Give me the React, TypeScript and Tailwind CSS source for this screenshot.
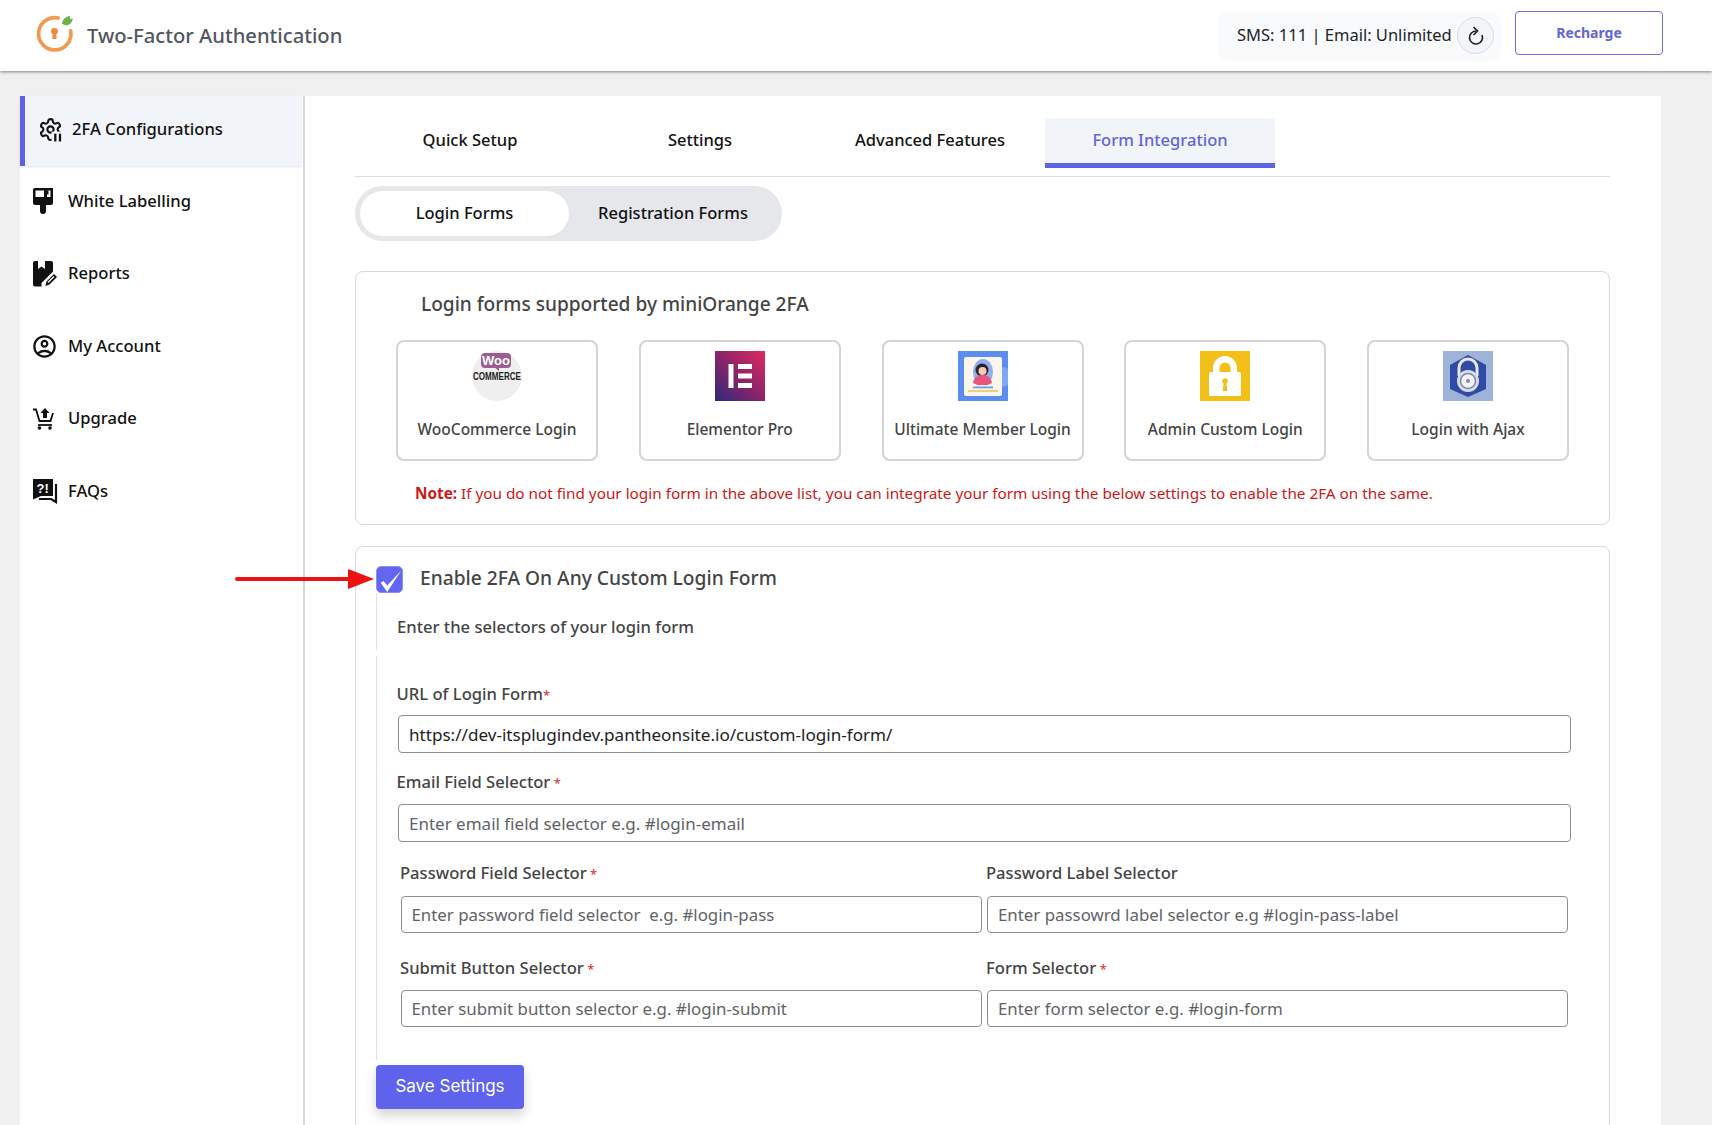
import { MdOutlineAccountCircle } from "react-icons/md";

function Logo() {
  return (
    <svg width="41" height="41" viewBox="0 0 38 38" fill="none" className="mb-[5px]">
      <path d="M22.500 4.600A15 15 0 1 0 34 16.500" stroke="#f0994f" strokeWidth="3.400" strokeLinecap="round" />
      <path d="M26 10c.3-4 3-6.400 7-7.500l.5 3 2.500-.5c-.5 3.500-3 6.200-6.500 6.500z" fill="#6fb04a" />
      <circle cx="19" cy="17" r="3.200" fill="#ef8a3c" />
      <path d="M17.600 18h2.800l.6 6h-4z" fill="#ef8a3c" />
    </svg>
  );
}

function RefreshIcon() {
  return (
    <svg width="18" height="20" viewBox="0 0 18 20" fill="none" stroke="#222" strokeWidth="1.700">
      <path d="M9 5A6.500 6.500 0 1 0 15 9" />
      <path d="M6.500 1l4 4-4 4" />
    </svg>
  );
}

function GearIcon() {
  return (
    <svg width="25" height="25" viewBox="0 0 24 24" fill="none" stroke="#111" strokeWidth="2">
      <path d="M12.220 2h-.44a2 2 0 0 0-2 2v.18a2 2 0 0 1-1 1.730l-.43.25a2 2 0 0 1-2 0l-.15-.08a2 2 0 0 0-2.730.73l-.22.38a2 2 0 0 0 .73 2.730l.15.1a2 2 0 0 1 1 1.720v.51a2 2 0 0 1-1 1.740l-.15.09a2 2 0 0 0-.73 2.730l.22.38a2 2 0 0 0 2.730.73l.15-.08a2 2 0 0 1 2 0l.43.25a2 2 0 0 1 1 1.730V20a2 2 0 0 0 2 2h.44a2 2 0 0 0 2-2v-.18a2 2 0 0 1 1-1.730l.43-.25a2 2 0 0 1 2 0l.15.08a2 2 0 0 0 2.730-.73l.22-.39a2 2 0 0 0-.73-2.730l-.15-.08a2 2 0 0 1-1-1.740v-.5a2 2 0 0 1 1-1.740l.15-.09a2 2 0 0 0 .73-2.730l-.22-.38a2 2 0 0 0-2.730-.73l-.15.08a2 2 0 0 1-2 0l-.43-.25a2 2 0 0 1-1-1.730V4a2 2 0 0 0-2-2z" />
      <circle cx="12" cy="12" r="3" />
      <rect x="13" y="14" width="11" height="10" fill="#f1f5f9" stroke="none" />
      <rect x="15.500" y="16" width="2.200" height="7.500" fill="#111" stroke="none" />
      <rect x="20" y="16" width="2.200" height="7.500" fill="#111" stroke="none" />
    </svg>
  );
}

function BrushIcon() {
  return (
    <svg width="20" height="26" viewBox="0 0 20 26">
      <path d="M2 0h18v15a2 2 0 0 1-2 2h-5v6a3 3 0 0 1-6 0v-6H2a2 2 0 0 1-2-2V2a2 2 0 0 1 2-2z" fill="#111" />
      <path d="M2.500 2.500h8.500v6.500h-8.500zM14 2.500h3.500v6.500h-3.500z" fill="#fff" />
      <rect x="14" y="2.500" width="1.500" height="4" fill="#111" />
    </svg>
  );
}

function ReportIcon() {
  return (
    <svg width="24" height="26" viewBox="0 0 24 26">
      <path d="M2 0h3v8l3.500-2.500L12 8V0h6a2 2 0 0 1 2 2v8.500L8.500 22v3.500H2a2 2 0 0 1-2-2V2a2 2 0 0 1 2-2z" fill="#111" />
      <path d="M12.500 25l1-4.500L21 13l3 3-7.500 7.500z" fill="#111" />
      <path d="M15 21.500l6-6" stroke="#fff" strokeWidth="1.200" />
    </svg>
  );
}

function CartIcon() {
  return (
    <svg width="21" height="22" viewBox="0 0 21 22" fill="none" stroke="#111" strokeWidth="1.800">
      <path d="M0 1.500h3l3.500 11.500h11l2.500-8" />
      <path d="M5 17h14" />
      <circle cx="6.500" cy="20" r="1.800" fill="#111" stroke="none" />
      <circle cx="17" cy="20" r="1.800" fill="#111" stroke="none" />
      <path d="M12 0l4.500 5H14v5h-4V5H7.500z" fill="#111" stroke="none" />
    </svg>
  );
}

function FaqIcon() {
  return (
    <svg width="25" height="25" viewBox="0 0 25 25">
      <path d="M0 0h20v17H8l-8 3.500z" fill="#111" />
      <text x="3.500" y="14" fontSize="13" fontWeight="700" fill="#fff" fontFamily="'Liberation Sans', sans-serif">
        ?!
      </text>
      <path d="M23 5v18l-5-3H6" fill="none" stroke="#111" strokeWidth="2.200" />
    </svg>
  );
}

function WooLogo() {
  return (
    <svg width="50" height="50" viewBox="0 0 50 50">
      <circle cx="25" cy="25" r="25" fill="#efefef" />
      <rect x="9" y="2" width="30" height="15" rx="4" fill="#9b5c8f" />
      <path d="M22 16l5 4v-4z" fill="#9b5c8f" />
      <text x="24" y="14" textAnchor="middle" fontSize="13" fontWeight="700" fill="#fff" fontFamily="'Liberation Sans', sans-serif">
        Woo
      </text>
      <text x="1" y="28.500" textLength="48" lengthAdjust="spacingAndGlyphs" fontSize="10" fontWeight="700" fill="#222" fontFamily="'Liberation Sans', sans-serif">
        COMMERCE
      </text>
    </svg>
  );
}

function ElementorLogo() {
  return (
    <svg width="50" height="50" viewBox="0 0 50 50">
      <defs>
        <linearGradient id="el" x1="0" y1="1" x2="1" y2="0">
          <stop offset="0" stopColor="#2f2a7c" />
          <stop offset="0.5" stopColor="#8a2468" />
          <stop offset="1" stopColor="#e22a5f" />
        </linearGradient>
      </defs>
      <rect width="50" height="50" fill="url(#el)" />
      <path d="M13.500 13h5v24h-5zM23 13h14v5H23zM23 22.500h14v5H23zM23 32h14v5H23z" fill="#fff" />
    </svg>
  );
}

function MemberLogo() {
  return (
    <svg width="50" height="50" viewBox="0 0 50 50">
      <rect width="50" height="50" fill="#5a8df0" />
      <circle cx="44" cy="26" r="10" fill="#7fa8f4" />
      <rect x="6" y="6" width="38" height="39" rx="2" fill="#faf5ee" />
      <ellipse cx="25" cy="21" rx="10" ry="13" fill="#8fb0ec" />
      <circle cx="24" cy="19" r="6.500" fill="#2b2230" />
      <circle cx="24.500" cy="20" r="4" fill="#f4c9b8" />
      <path d="M15 32c1-6 5-8 9.500-8s8.500 2 9.500 8l-4.500 2h-10z" fill="#e8557c" />
      <rect x="15" y="35.500" width="20" height="1.800" fill="#6f9be8" />
      <rect x="10" y="39" width="30" height="2" fill="#f1cf74" />
    </svg>
  );
}

function AdminLogo() {
  return (
    <svg width="50" height="50" viewBox="0 0 50 50">
      <rect width="50" height="50" fill="#f2c018" />
      <path d="M13 22v-5a12 12 0 0 1 24 0v5h-6.500v-5a5.500 5.500 0 0 0-11 0v5z" fill="#fff" />
      <rect x="9" y="21" width="32" height="24" rx="1.500" fill="#fff" />
      <circle cx="25" cy="30" r="2.800" fill="#f2c018" />
      <path d="M23.700 31h2.600l1 9h-4.600z" fill="#f2c018" />
    </svg>
  );
}

function AjaxLogo() {
  return (
    <svg width="50" height="50" viewBox="0 0 50 50">
      <rect width="50" height="50" fill="#9fb2d8" />
      <path d="M25 4l18 10v24L25 46 7 38V14z" fill="#2f4ba5" />
      <path d="M16 25v-8a9 9 0 0 1 18 0v8" fill="none" stroke="#e6e8ef" strokeWidth="3" />
      <circle cx="25" cy="30" r="11" fill="#d8dbe6" />
      <circle cx="25" cy="30" r="7.500" fill="#f2f3f7" stroke="#7d88a8" strokeWidth="1.500" />
      <circle cx="25" cy="30" r="2" fill="#7d88a8" />
    </svg>
  );
}

const sideItems = [
  { label: "White Labelling", icon: <BrushIcon /> },
  { label: "Reports", icon: <ReportIcon /> },
  { label: "My Account", icon: <MdOutlineAccountCircle size={27} color="#111" className="-ml-[2px]" /> },
  { label: "Upgrade", icon: <CartIcon /> },
  { label: "FAQs", icon: <FaqIcon /> },
];

const forms = [
  { label: "WooCommerce Login", logo: <WooLogo /> },
  { label: "Elementor Pro", logo: <ElementorLogo /> },
  { label: "Ultimate Member Login", logo: <MemberLogo /> },
  { label: "Admin Custom Login", logo: <AdminLogo /> },
  { label: "Login with Ajax", logo: <AjaxLogo /> },
];

const tabs = ["Quick Setup", "Settings", "Advanced Features", "Form Integration"];

function Req() {
  return <span className="text-[#d9383f] text-[13px]"> *</span>;
}

function Field({ placeholder }: { placeholder: string }) {
  return (
    <input
      readOnly
      placeholder={placeholder}
      className="w-full h-[37px] px-[10px] border border-[#8c8f94] rounded-[4px] bg-white text-[16.850px] text-[#333] placeholder:text-[#5f6368] outline-none"
    />
  );
}

export default function App() {
  return (
    <div className="w-[1712px] h-[1125px] overflow-hidden bg-[#f0f0f1] font-['Noto_Sans',sans-serif]">
      <header className="h-[71px] bg-white flex items-center justify-between pl-[34px] pr-[49px] shadow-[0_1px_3px_rgba(0,0,0,0.45)] relative">
        <div className="flex items-center gap-[12px]">
          <Logo />
          <h1 className="text-[20.200px] text-[#50575e] font-medium">Two-Factor Authentication</h1>
        </div>
        <div className="flex items-center gap-[15px]">
          <div className="w-[281px] h-[47px] bg-[#f8fafc] rounded-[10px] flex items-center justify-between pl-[18px] pr-[6px] shadow-[0_1px_4px_rgba(0,0,0,0.04)]">
            <span className="whitespace-nowrap text-[16.500px] text-[#1d2327]">SMS: 111 | Email: Unlimited</span>
            <span className="w-[37px] h-[37px] shrink-0 rounded-full border border-[#d8dce2] bg-[#f3f5f8] flex items-center justify-center">
              <RefreshIcon />
            </span>
          </div>
          <button className="w-[148px] h-[44px] mb-[6px] border-[1.500px] border-[#6c6fd8] rounded-[4px] text-[14px] font-bold text-[#6366d6] bg-white">
            Recharge
          </button>
        </div>
      </header>

      <div className="flex pt-[25px] pl-[20px] pr-[51px]">
        <aside className="w-[283px] h-[1029px] bg-white shrink-0">
          <div className="h-[70px] flex items-center gap-[9px] pl-[13px] pb-[3px] border-l-[5px] border-[#5e62e6] bg-[#f1f5f9] shadow-[0_1px_2px_rgba(0,0,0,0.12)] mr-[2px]">
            <GearIcon />
            <span className="text-[16.600px] font-medium text-[#111]">2FA Configurations</span>
          </div>
          {sideItems.map((item) => (
            <div key={item.label} className="h-[72.500px] flex items-center pl-[13px] pb-[2px]">
              <span className="w-[35px] flex items-center">{item.icon}</span>
              <span className="text-[16.600px] font-medium text-[#111]">{item.label}</span>
            </div>
          ))}
        </aside>

        <main className="flex-1 h-[1029px] bg-white border-l-2 border-[#d6d6d6] pl-[50px] pr-[51px] pt-[22px]">
          <div className="flex h-[59px] border-b border-[#dcdcdc]">
            {tabs.map((tab, i) =>
              i === 3 ? (
                <div key={tab} className="w-[230px] h-[50px] bg-[#f1f5f9] border-b-[5px] border-[#5e62e6] flex items-center justify-center text-[16.500px] font-medium text-[#6366d6]">
                  {tab}
                </div>
              ) : (
                <div key={tab} className="w-[230px] h-[50px] pb-[5px] flex items-center justify-center text-[16.500px] font-medium text-[#111]">
                  {tab}
                </div>
              )
            )}
          </div>

          <div className="mt-[9px] w-[427px] h-[55px] bg-[#e5e7eb] rounded-full flex items-center pl-[5px] text-[16.500px] font-medium text-[#111]">
            <div className="w-[209px] h-[45px] bg-white rounded-full flex items-center justify-center">Login Forms</div>
            <div className="flex-1 flex items-center justify-center pr-[5px]">Registration Forms</div>
          </div>

          <section className="mt-[30px] h-[254px] border border-[#d9d9d9] rounded-[8px] relative">
            <h2 className="ml-[65px] mt-[18px] leading-[28px] text-[19.100px] font-medium text-[#444]">
              Login forms supported by miniOrange 2FA
            </h2>
            <div className="mt-[22px] mx-[40px] flex justify-between">
              {forms.map((form) => (
                <div key={form.label} className="w-[202px] h-[121px] border-2 border-[#d4d4d4] rounded-[8px] flex flex-col items-center pt-[9px]">
                  {form.logo}
                  <span className="mt-[17px] text-[15.500px] font-medium text-[#444]">{form.label}</span>
                </div>
              ))}
            </div>
            <p className="ml-[59px] mt-[21px] text-[15.300px] text-[#cc1818]">
              <b className="font-bold">Note:</b> If you do not find your login form in the above list, you can integrate your form using the below settings to enable the 2FA on the same.
            </p>
          </section>

          <section className="mt-[21px] h-[600px] border border-[#d9d9d9] rounded-[8px] relative">
            <svg className="absolute left-[-121px] top-[21px]" width="140" height="22" viewBox="0 0 140 22">
              <rect x="0" y="9" width="115" height="4" rx="2" fill="#ee1111" />
              <path d="M113 1l26 10-26 10z" fill="#ee1111" />
            </svg>
            <div className="flex items-center h-[27px] mt-[19px] pl-[20px]">
              <span className="w-[27px] h-[27px] rounded-[5px] bg-[#6366f1] border border-[#8f90e0] flex items-center justify-center">
                <svg width="25" height="25" viewBox="0 0 27 27">
                  <path d="M4 17l3-2 4 5L26 4 11 27z" fill="#fff" />
                </svg>
              </span>
              <span className="ml-[17px] pb-[3px] text-[19.200px] font-medium text-[#444]">Enable 2FA On Any Custom Login Form</span>
            </div>
            <div className="ml-[20px] h-[57px] border-l border-[#e0e0e0] pl-[20px] pt-[22px] text-[16.600px] font-medium text-[#444] leading-[24px]">
              Enter the selectors of your login form
            </div>
            <div className="ml-[20px] mt-[6px] h-[404px] border-l border-[#e0e0e0] pl-[19.500px] pt-[26px] text-[16.600px] font-medium text-[#444]">
              <div className="leading-[24px]">URL of Login Form<span className="text-[#d9383f] text-[13px]">*</span></div>
              <input
                readOnly
                value="https://dev-itsplugindev.pantheonsite.io/custom-login-form/"
                className="mt-[8px] ml-[1.500px] w-[1173px] h-[38px] px-[10px] border border-[#8c8f94] rounded-[4px] bg-white text-[17.100px] font-normal text-[#222] outline-none"
              />
              <div className="mt-[17px] leading-[24px]">Email Field Selector<Req /></div>
              <input
                readOnly
                placeholder="Enter email field selector e.g. #login-email"
                className="mt-[9px] ml-[1.500px] w-[1173px] h-[38px] px-[10px] border border-[#8c8f94] rounded-[4px] bg-white text-[17px] font-normal text-[#333] placeholder:text-[#5f6368] outline-none"
              />
              <div className="mt-[19px] ml-[3.500px] grid grid-cols-[586px_581px] leading-[24px]">
                <div>Password Field Selector<Req /></div>
                <div>Password Label Selector</div>
              </div>
              <div className="mt-[10px] ml-[4px] grid grid-cols-[581px_581px] gap-x-[5.500px] font-normal">
                <Field placeholder="Enter password field selector  e.g. #login-pass" />
                <Field placeholder="Enter passowrd label selector e.g #login-pass-label" />
              </div>
              <div className="mt-[23px] ml-[3.500px] grid grid-cols-[586px_581px] leading-[24px]">
                <div>Submit Button Selector<Req /></div>
                <div>Form Selector<Req /></div>
              </div>
              <div className="mt-[9px] ml-[4px] grid grid-cols-[581px_581px] gap-x-[5.500px] font-normal">
                <Field placeholder="Enter submit button selector e.g. #login-submit" />
                <Field placeholder="Enter form selector e.g. #login-form" />
              </div>
            </div>
            <button className="mt-[5px] ml-[20px] w-[148px] h-[44px] rounded-[4px] bg-[#5f63ec] text-white text-[17px] font-['Inter',sans-serif] shadow-[0_6px_12px_rgba(0,0,0,0.18)]">
              Save Settings
            </button>
          </section>
        </main>
      </div>
    </div>
  );
}
